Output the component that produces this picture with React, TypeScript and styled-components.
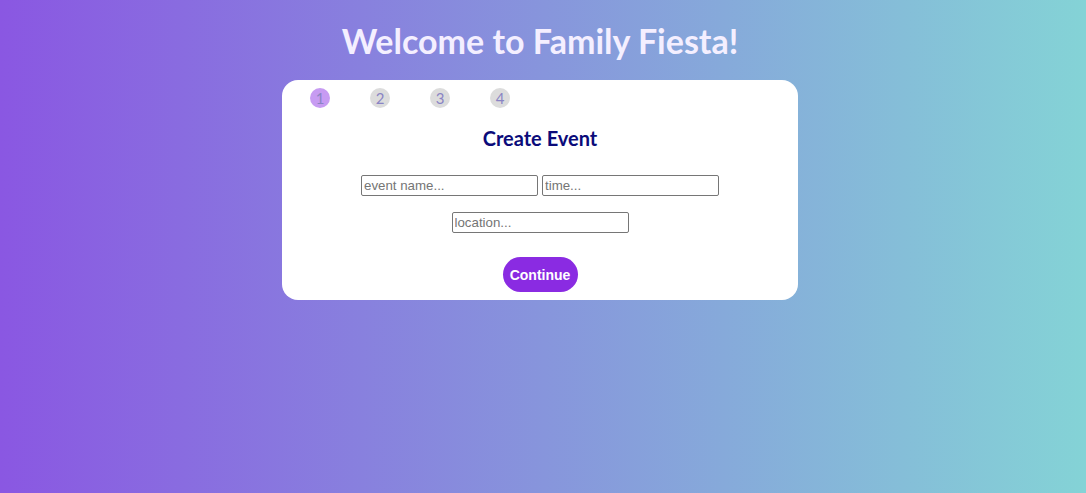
import React from "react";
import styled, { createGlobalStyle } from "styled-components";

const Global = createGlobalStyle`
  html, body { margin: 0; padding: 0; }
  body {
    min-height: 493px;
    background: linear-gradient(to right, #8a57e2, #84d3d6);
    font-family: "Trebuchet MS", Lato, sans-serif;
  }
`;

const Page = styled.div`
  display: flex;
  flex-direction: column;
  align-items: center;
  padding: 20px 6px 0 0;
`;

const Title = styled.h1`
  margin: 0 0 19px;
  font-size: 34px;
  line-height: 41px;
  font-weight: bold;
  color: #f4efff;
`;

const Card = styled.div`
  width: 516px;
  background: #fff;
  border-radius: 16px;
  padding: 8px 0 8px;
  box-sizing: border-box;
  display: flex;
  flex-direction: column;
  align-items: center;
`;

const Steps = styled.div`
  align-self: stretch;
  display: flex;
  gap: 40px;
  padding-left: 28px;
`;

const Step = styled.div<{ $active?: boolean }>`
  width: 20px;
  height: 20px;
  border-radius: 50%;
  background: ${(p) => (p.$active ? "#c79bf2" : "#dcdcdc")};
  color: #8a84c4;
  font-size: 15px;
  display: flex;
  align-items: center;
  justify-content: center;
`;

const Heading = styled.h2`
  margin: 17px 0 24px;
  font-size: 20px;
  line-height: 26px;
  font-weight: bold;
  color: #0b0b7a;
`;

const Row = styled.div`
  display: flex;
  gap: 4px;
  justify-content: center;
  margin-bottom: 16px;
`;

const Input = styled.input`
  width: 177px;
  height: 21px;
  box-sizing: border-box;
  border: 1px solid #767676;
  border-radius: 2px;
  padding: 1px 2px;
  font-family: "Liberation Sans", Arial, sans-serif;
  font-size: 13.3px;
  &::placeholder { color: #757575; }
`;

const Button = styled.button`
  margin-top: 8px;
  width: 75px;
  height: 35px;
  border: none;
  border-radius: 18px;
  background: #8a2be2;
  color: #fff;
  font-family: "Liberation Sans", Arial, sans-serif;
  font-weight: bold;
  font-size: 14px;
`;

export default function App() {
  return (
    <>
      <Global />
      <Page>
        <Title>Welcome to Family Fiesta!</Title>
        <Card>
          <Steps>
            <Step $active>1</Step>
            <Step>2</Step>
            <Step>3</Step>
            <Step>4</Step>
          </Steps>
          <Heading>Create Event</Heading>
          <Row>
            <Input placeholder="event name..." />
            <Input placeholder="time..." />
          </Row>
          <Row>
            <Input placeholder="location..." />
          </Row>
          <Button>Continue</Button>
        </Card>
      </Page>
    </>
  );
}
